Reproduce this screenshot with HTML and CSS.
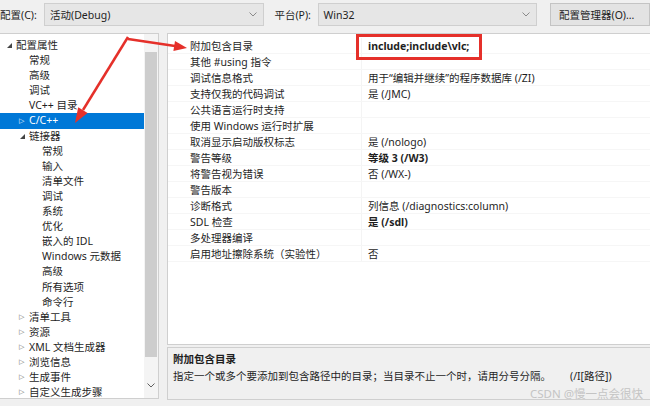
FILE: index.html
```html
<!DOCTYPE html>
<html lang="zh-CN">
<head>
  <meta charset="UTF-8" />
  <title>属性页</title>
  <link rel="stylesheet" href="styles.css">
</head>
<body>

  <!-- Configuration bar -->
  <div class="topbar">
    <span class="label label-config">配置(C):</span>
    <div class="combo combo-config">
      <span>活动(Debug)</span>
      <svg class="chevron" width="8" height="5" viewBox="0 0 8 5"><path d="M0.5 0.5 L4 4 L7.5 0.5" /></svg>
    </div>
    <span class="label label-platform">平台(P):</span>
    <div class="combo combo-platform">
      <span>Win32</span>
      <svg class="chevron" width="8" height="5" viewBox="0 0 8 5"><path d="M0.5 0.5 L4 4 L7.5 0.5" /></svg>
    </div>
    <button class="manager">配置管理器(O)...</button>
  </div>

  <div class="main">
    <!-- Tree -->
    <div class="tree">
      <ul class="tree-list">
        <li class="lv0"><span class="caret open"></span>配置属性</li>
        <li class="lv1"><span class="caret"></span>常规</li>
        <li class="lv1"><span class="caret"></span>高级</li>
        <li class="lv1"><span class="caret"></span>调试</li>
        <li class="lv1"><span class="caret"></span>VC++ 目录</li>
        <li class="lv1 selected"><span class="caret closed"></span>C/C++</li>
        <li class="lv1"><span class="caret open"></span>链接器</li>
        <li class="lv2"><span class="caret"></span>常规</li>
        <li class="lv2"><span class="caret"></span>输入</li>
        <li class="lv2"><span class="caret"></span>清单文件</li>
        <li class="lv2"><span class="caret"></span>调试</li>
        <li class="lv2"><span class="caret"></span>系统</li>
        <li class="lv2"><span class="caret"></span>优化</li>
        <li class="lv2"><span class="caret"></span>嵌入的 IDL</li>
        <li class="lv2"><span class="caret"></span>Windows 元数据</li>
        <li class="lv2"><span class="caret"></span>高级</li>
        <li class="lv2"><span class="caret"></span>所有选项</li>
        <li class="lv2"><span class="caret"></span>命令行</li>
        <li class="lv1"><span class="caret closed"></span>清单工具</li>
        <li class="lv1"><span class="caret closed"></span>资源</li>
        <li class="lv1"><span class="caret closed"></span>XML 文档生成器</li>
        <li class="lv1"><span class="caret closed"></span>浏览信息</li>
        <li class="lv1"><span class="caret closed"></span>生成事件</li>
        <li class="lv1"><span class="caret closed"></span>自定义生成步骤</li>
      </ul>
      <div class="scrollbar">
        <div class="thumb"></div>
        <svg class="scroll-down" width="8" height="5" viewBox="0 0 8 5"><path d="M0.5 0.5 L4 4 L7.5 0.5" /></svg>
      </div>
    </div>

    <!-- Property grid + description -->
    <div class="right">
      <div class="grid">
        <div class="row"><span class="name">附加包含目录</span><span class="value bold">include;include\vlc;</span></div>
        <div class="row"><span class="name">其他 #using 指令</span><span class="value"></span></div>
        <div class="row"><span class="name">调试信息格式</span><span class="value">用于“编辑并继续”的程序数据库 (/ZI)</span></div>
        <div class="row"><span class="name">支持仅我的代码调试</span><span class="value">是 (/JMC)</span></div>
        <div class="row"><span class="name">公共语言运行时支持</span><span class="value"></span></div>
        <div class="row"><span class="name">使用 Windows 运行时扩展</span><span class="value"></span></div>
        <div class="row"><span class="name">取消显示启动版权标志</span><span class="value">是 (/nologo)</span></div>
        <div class="row"><span class="name">警告等级</span><span class="value bold">等级 3 (/W3)</span></div>
        <div class="row"><span class="name">将警告视为错误</span><span class="value">否 (/WX-)</span></div>
        <div class="row"><span class="name">警告版本</span><span class="value"></span></div>
        <div class="row"><span class="name">诊断格式</span><span class="value">列信息 (/diagnostics:column)</span></div>
        <div class="row"><span class="name">SDL 检查</span><span class="value bold">是 (/sdl)</span></div>
        <div class="row"><span class="name">多处理器编译</span><span class="value"></span></div>
        <div class="row"><span class="name">启用地址擦除系统（实验性）</span><span class="value">否</span></div>
        <div class="highlight"></div>
      </div>
      <div class="desc">
        <div class="desc-title">附加包含目录</div>
        <div class="desc-text">指定一个或多个要添加到包含路径中的目录；当目录不止一个时，请用分号分隔。<span class="switch">(/I[路径])</span></div>
        <div class="watermark">CSDN @慢一点会很快</div>
      </div>
    </div>
  </div>

  <!-- Annotation arrows -->
  <svg class="arrows" width="650" height="406" viewBox="0 0 650 406">
    <line x1="128" y1="37" x2="83" y2="110" />
    <polygon points="75,123 87.6,113.1 78.2,107.3" />
    <line x1="128" y1="39" x2="175" y2="46" />
    <polygon points="187,48 173.4,50.9 175,41.1" />
  </svg>

</body>
</html>
```

FILE: styles.css
```css
body {
  margin: 0;
  width: 650px;
  height: 406px;
  overflow: hidden;
  background: #f0f0f0;
  font-family: "Noto Sans", "Noto Sans CJK SC", sans-serif;
  font-size: 10.5px;
  color: #1e1e1e;
}

/* Top bar */
.topbar {
  display: flex;
  align-items: center;
  height: 29px;
}

.label-config {
  margin-left: 0;
  width: 45px;
}

.label-platform {
  margin-left: 10px;
  width: 44px;
}

.combo {
  height: 23px;
  box-sizing: border-box;
  border: 1px solid #cfcfcf;
  background: #e6e6e6;
  display: flex;
  align-items: center;
  justify-content: space-between;
  padding: 0 6px 0 5px;
}

.combo-config {
  width: 225px;
}

.combo-platform {
  width: 224px;
}

.chevron path,
.scroll-down path {
  fill: none;
  stroke: #8a8a8a;
  stroke-width: 1;
}

.manager {
  margin-left: 13px;
  height: 23px;
  width: 100px;
  flex-shrink: 0;
  border: 1px solid #c4c4c4;
  background: #e3e3e3;
  font-family: inherit;
  font-size: 10.5px;
  color: #1e1e1e;
  text-align: left;
  padding: 0 8px;
}

/* Main */
.main {
  display: flex;
  margin-top: 4px;
  height: 367px;
}

.tree {
  width: 160px;
  flex-shrink: 0;
  margin-left: -1px;
  height: 366px;
  box-sizing: border-box;
  border: 1px solid #cfcfcf;
  background: #fff;
  display: flex;
  position: relative;
  overflow: hidden;
}

.tree-list {
  list-style: none;
  margin: 0;
  padding: 4px 0 0;
  width: 144px;
  flex-shrink: 0;
}

.tree-list li {
  height: 15.1px;
  line-height: 15.1px;
  display: flex;
  align-items: center;
  white-space: nowrap;
}

.lv0 { padding-left: 3px; }
.lv1 { padding-left: 16px; }
.lv2 { padding-left: 29px; }

.caret {
  width: 13px;
  height: 15px;
  flex-shrink: 0;
  position: relative;
}

.caret.open::before {
  content: "";
  position: absolute;
  left: 4px;
  top: 5px;
  border-left: 5px solid transparent;
  border-bottom: 5px solid #444;
}

.caret.closed::before {
  content: "▷";
  position: absolute;
  left: 3px;
  top: 0;
  font-family: "DejaVu Sans", sans-serif;
  font-size: 7px;
  color: #666;
}

.tree-list li.selected {
  background: #0078d7;
  color: #fff;
}

.tree-list li.selected .caret.closed::before {
  color: #fff;
}

.scrollbar {
  width: 14px;
  flex-shrink: 0;
  background: #f4f4f4;
  position: relative;
}

.thumb {
  margin: 18px 1px 0;
  height: 305px;
  background: #cdcdcd;
}

.scroll-down {
  position: absolute;
  left: 3px;
  bottom: 10px;
}

.scroll-down path {
  stroke: #606060;
}

.right {
  margin-left: 8px;
  width: 484px;
  flex-shrink: 0;
  display: flex;
  flex-direction: column;
  gap: 2px;
}

/* Property grid */
.grid {
  height: 312px;
  box-sizing: border-box;
  border: 1px solid #cfcfcf;
  background: #fff;
  padding-top: 4px;
  position: relative;
}

.row {
  display: flex;
  height: 16px;
  line-height: 16px;
  box-sizing: border-box;
  border-bottom: 1px solid #f6f6f6;
  white-space: nowrap;
}

.name {
  width: 171px;
  padding-left: 22px;
}

.value {
  padding-left: 6px;
  flex: 1;
  border-left: 1px solid #f4f4f4;
}

.bold {
  font-weight: bold;
}

.highlight {
  position: absolute;
  left: 188px;
  top: 0;
  width: 126px;
  height: 26px;
  box-sizing: border-box;
  border: 3px solid #e5302a;
}

/* Description */
.desc {
  height: 53px;
  box-sizing: border-box;
  border: 1px solid #cfcfcf;
  background: #f0f0f0;
  padding: 3px 0 0 5px;
  position: relative;
}

.desc-title {
  font-weight: bold;
  line-height: 17px;
}

.desc-text {
  line-height: 17px;
  white-space: nowrap;
}

.switch {
  margin-left: 19px;
}

.watermark {
  position: absolute;
  right: 7px;
  bottom: -2px;
  font-size: 11.5px;
  color: #c4c4c4;
}

/* Annotation arrows */
.arrows {
  position: absolute;
  left: 0;
  top: 0;
  pointer-events: none;
}

.arrows line {
  stroke: #e5302a;
  stroke-width: 2.5;
}

.arrows polygon {
  fill: #e5302a;
}
```
